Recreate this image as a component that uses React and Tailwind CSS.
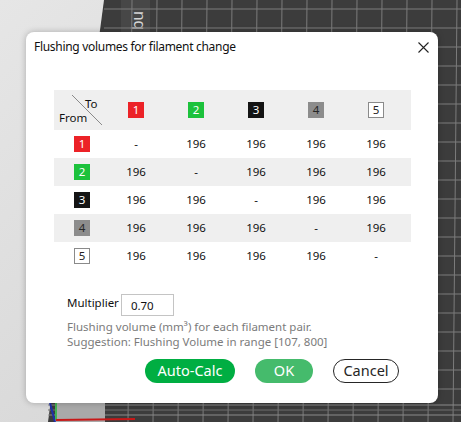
import React from 'react';

const font = { fontFamily: '"Noto Sans", "Liberation Sans", sans-serif' };

const badges = [
  { label: '1', cls: 'bg-[#ec2227] text-white' },
  { label: '2', cls: 'bg-[#1cc23c] text-white' },
  { label: '3', cls: 'bg-[#141414] text-white' },
  { label: '4', cls: 'bg-[#8c8c8c] text-[#262626]' },
  { label: '5', cls: 'bg-white text-[#222] border border-[#8a8a8a]' },
];

function Badge({ index }) {
  const b = badges[index];
  return (
    <span className={`w-[16px] h-[16px] flex items-center justify-center text-[11.5px] leading-none ${b.cls}`}>
      {b.label}
    </span>
  );
}

function Backdrop() {
  const vLines = [];
  for (let x = 132; x < 470; x += 25) vLines.push(x);
  const hLines = [];
  for (let y = 9; y < 400; y += 19) hLines.push(y);

  return (
    <svg className="absolute inset-0" width="461" height="422" viewBox="0 0 461 422">
      <defs>
        <linearGradient id="side" x1="0" y1="0" x2="1" y2="1">
          <stop offset="0" stopColor="#e6e6e6" />
          <stop offset="1" stopColor="#cfcfcf" />
        </linearGradient>
      </defs>
      <rect width="461" height="422" fill="url(#side)" />
      <polygon points="104,0 461,0 461,422 48,422" fill="#3c3c3c" />
      <rect x="121" y="0" width="29" height="32" fill="#474747" />
      <text
        x="143"
        y="30"
        fill="#d4d4d4"
        fontSize="17"
        fontFamily="Liberation Sans, sans-serif"
        transform="rotate(-90 143 30)"
      >
        bu
      </text>
      {vLines.map((x) => (
        <line key={'v' + x} x1={x} y1="0" x2={x - 4} y2="422" stroke="#7c7c7c" strokeWidth="1" />
      ))}
      {hLines.map((y) => (
        <line key={'h' + y} x1="104" y1={y} x2="461" y2={y} stroke="#7c7c7c" strokeWidth="1" />
      ))}
      <line x1="48" y1="405" x2="461" y2="405" stroke="#8a8a8a" />
      <line x1="48" y1="410" x2="461" y2="410" stroke="#6e6e6e" />
      <line x1="48" y1="415" x2="461" y2="415" stroke="#8a8a8a" />
      <rect x="55" y="403" width="50" height="19" fill="#a9a9a9" />
      <line x1="50" y1="403" x2="55" y2="422" stroke="#1f2fa8" strokeWidth="2" />
      <line x1="56" y1="403" x2="56" y2="420" stroke="#22b83a" strokeWidth="1.5" />
      <line x1="56" y1="420" x2="135" y2="419" stroke="#c81818" strokeWidth="2" />
    </svg>
  );
}

function HeaderCorner() {
  return (
    <div className="relative h-full text-[11.5px] text-[#111]">
      <svg className="absolute left-0 top-0" width="52" height="40">
        <line x1="18" y1="5" x2="48" y2="35" stroke="#8a8a8a" strokeWidth="1" />
      </svg>
      <span className="absolute left-[31px] top-[5px]">To</span>
      <span className="absolute left-[5px] top-[19px]">From</span>
    </div>
  );
}

const rows = [
  ['-', '196', '196', '196', '196'],
  ['196', '-', '196', '196', '196'],
  ['196', '196', '-', '196', '196'],
  ['196', '196', '196', '-', '196'],
  ['196', '196', '196', '196', '-'],
];

export default function App() {
  return (
    <div className="relative w-[461px] h-[422px] overflow-hidden pt-[32px] pl-[26px]" style={font}>
      <Backdrop />
      <div className="relative w-[412px] h-[371px] bg-white rounded-[8px] shadow-[0_0_6px_rgba(0,0,0,0.25)] flex flex-col">
        <div className="h-[30px] flex items-center justify-between pl-[8px] pr-[9px]">
          <span className="text-[12px] tracking-[-0.3px] text-[#111]">Flushing volumes for filament change</span>
          <svg width="11" height="11" viewBox="0 0 11 11">
            <path d="M0.5 0.5L10.5 10.5M10.5 0.5L0.5 10.5" stroke="#222" strokeWidth="1.1" fill="none" />
          </svg>
        </div>

        <div className="mt-[28px] ml-[28px] w-[357px] text-[11.5px] text-[#111]">
          <div className="h-[40px] bg-[#efefef] grid grid-cols-[52px_60px_60px_60px_60px_60px] items-center">
            <HeaderCorner />
            {badges.map((_, i) => (
              <div key={i} className="flex justify-center">
                <Badge index={i} />
              </div>
            ))}
          </div>
          {rows.map((row, r) => (
            <div
              key={r}
              className={`h-[28px] grid grid-cols-[52px_60px_60px_60px_60px_60px] items-center ${r % 2 === 1 ? 'bg-[#efefef]' : 'bg-white'}`}
            >
              <div className="flex pl-[20px]">
                <Badge index={r} />
              </div>
              {row.map((v, c) => (
                <div key={c} className="text-center">
                  {v}
                </div>
              ))}
            </div>
          ))}
        </div>

        <div className="mt-[24px] ml-[41px] flex items-center h-[22px]">
          <span className="text-[11.5px] text-[#111] -mt-[5px]">Multiplier</span>
          <div className="ml-[2px] w-[53px] h-[22px] border border-[#c4c4c4] flex items-center pl-[9px] pt-[2px] text-[11.5px] text-[#111]">
            0.70
          </div>
        </div>
        <div className="mt-[3px] ml-[41px] text-[11.5px] leading-[15px] text-[#7b7b7b]">
          <div>Flushing volume (mm³) for each filament pair.</div>
          <div>Suggestion: Flushing Volume in range [107, 800]</div>
        </div>

        <div className="mt-[10px] flex justify-end gap-[20px] pr-[39px]">
          <button className="w-[90px] h-[24px] rounded-full bg-[#00ae42] text-white text-[14.5px]">
            Auto-Calc
          </button>
          <button className="w-[58px] h-[24px] rounded-full bg-[#45bb6c] text-white text-[14.5px]">OK</button>
          <button className="w-[66px] h-[24px] rounded-full bg-white border border-[#262626] text-[#262626] text-[14.5px]">
            Cancel
          </button>
        </div>
      </div>
    </div>
  );
}
